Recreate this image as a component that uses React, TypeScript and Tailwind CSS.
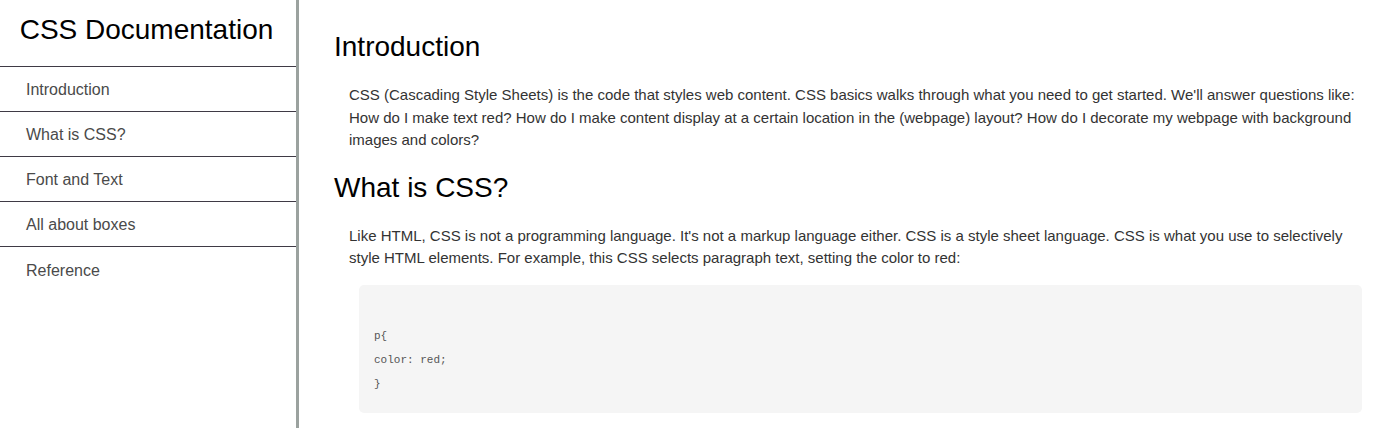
const navItems = ["Introduction", "What is CSS?", "Font and Text", "All about boxes", "Reference"];

export default function App() {
  return (
    <div className="flex h-[428px] overflow-hidden bg-white font-['Liberation_Sans',Arial,sans-serif]">
      <nav className="w-[299px] shrink-0 border-r-[3px] border-[#9ba29f] h-full">
        <header className="h-[67px] border-b border-[#3f3a45] flex items-center justify-center">
          <h1 className="text-[28px] text-black leading-none -mt-[7px] -ml-[3px]">CSS Documentation</h1>
        </header>
        <ul>
          {navItems.map((item) => (
            <li key={item} className="h-[45px] border-b border-[#3f3a45] last:border-b-0 flex items-center pl-[26px] pt-[2px]">
              <a className="text-[16px] text-[#4a4a4a]">{item}</a>
            </li>
          ))}
        </ul>
      </nav>
      <main className="flex-1 pl-[35px] pr-[12px] pt-[31px]">
        <section>
          <h2 className="text-[28px] text-black leading-[32px]">Introduction</h2>
          <p className="mt-[21px] pl-[15px] text-[15px] leading-[22.5px] text-[#333]">
            CSS (Cascading Style Sheets) is the code that styles web content. CSS basics walks through what you need to get started. We'll answer questions like: How do I make text red? How do I make content display at a certain location in the (webpage) layout? How do I decorate my webpage with background images and colors?
          </p>
        </section>
        <section>
          <h2 className="mt-[20px] text-[28px] text-black leading-[32px]">What is CSS?</h2>
          <p className="mt-[21px] pl-[15px] text-[15px] leading-[22.5px] text-[#333]">
            Like HTML, CSS is not a programming language. It's not a markup language either. CSS is a style sheet language. CSS is what you use to selectively style HTML elements. For example, this CSS selects paragraph text, setting the color to red:
          </p>
          <pre className="ml-[25px] mr-[7px] mt-[15px] rounded-[5px] bg-[#f5f5f5] px-[15px] pt-[15px] pb-[17px] font-['Liberation_Mono',monospace] text-[11px] leading-[24px] text-[#555]">
{`
p{
color: red;
}`}
          </pre>
        </section>
      </main>
    </div>
  );
}
